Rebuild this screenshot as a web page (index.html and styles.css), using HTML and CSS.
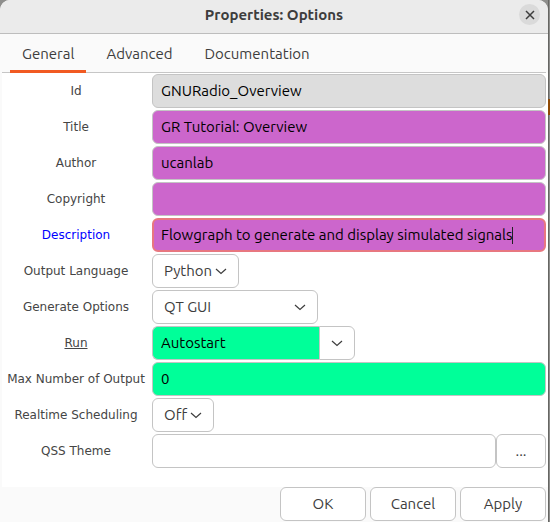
FILE: index.html
```html
<!DOCTYPE html>
<html lang="en">
<head>
<meta charset="utf-8">
<meta name="viewport" content="width=device-width, initial-scale=1">
<title>Properties: Options</title>
<link rel="stylesheet" href="styles.css">
</head>
<body>
<main class="dialog">
  <header class="titlebar">
    <h1>Properties: Options</h1>
    <button class="close" type="button" aria-label="Close">
      <svg width="10" height="10" viewBox="0 0 10 10"><path d="M1 1 9 9M9 1 1 9"/></svg>
    </button>
  </header>
  <nav class="tabs">
    <button class="tab active" type="button">General</button>
    <button class="tab" type="button">Advanced</button>
    <button class="tab" type="button">Documentation</button>
  </nav>
  <form class="params">
    <label for="id">Id</label>
    <input class="entry disabled" id="id" value="GNURadio_Overview" readonly>

    <label for="title">Title</label>
    <input class="entry string" id="title" value="GR Tutorial: Overview">

    <label for="author">Author</label>
    <input class="entry string" id="author" value="ucanlab">

    <label for="copyright">Copyright</label>
    <input class="entry string" id="copyright" value="">

    <label class="changed" for="description">Description</label>
    <div class="focused">
      <input class="entry string" id="description" value="Flowgraph to generate and display simulated signals">
      <span class="caret"></span>
    </div>

    <label for="language">Output Language</label>
    <div class="combo language">
      <select id="language"><option>Python</option><option>C++</option></select>
      <svg class="chevron" width="12" height="8" viewBox="0 0 12 8"><path d="M1 2 6 6.5 11 2"/></svg>
    </div>

    <label for="generate">Generate Options</label>
    <div class="combo generate">
      <select id="generate"><option>QT GUI</option><option>No GUI</option></select>
      <svg class="chevron" width="12" height="8" viewBox="0 0 12 8"><path d="M1 2 6 6.5 11 2"/></svg>
    </div>

    <label class="underlined" for="run">Run</label>
    <div class="editable">
      <input class="entry number" id="run" value="Autostart">
      <button type="button" aria-label="Show run choices">
        <svg class="chevron" width="12" height="8" viewBox="0 0 12 8"><path d="M1 2 6 6.5 11 2"/></svg>
      </button>
    </div>

    <label for="output">Max Number of Output</label>
    <input class="entry number" id="output" value="0">

    <label for="realtime">Realtime Scheduling</label>
    <div class="combo realtime">
      <select id="realtime"><option>Off</option><option>On</option></select>
      <svg class="chevron" width="12" height="8" viewBox="0 0 12 8"><path d="M1 2 6 6.5 11 2"/></svg>
    </div>

    <label for="theme">QSS Theme</label>
    <div class="file">
      <input class="entry" id="theme" value="">
      <button class="button browse" type="button">...</button>
    </div>
  </form>
  <footer class="actions">
    <button class="button" type="button">OK</button>
    <button class="button" type="button">Cancel</button>
    <button class="button" type="button">Apply</button>
  </footer>
</main>
<div class="desktop"><span class="desktop-block"></span></div>
</body>
</html>
```

FILE: styles.css
```css
* { box-sizing: border-box; }

body {
  margin: 0;
  display: flex;
  min-height: 100vh;
  overflow: hidden;
  background: #8e8e8c;
  color: #3d3d3d;
  font: 15px/20px Ubuntu, "Noto Sans", sans-serif;
}

button, input, select {
  font: inherit;
  color: inherit;
  margin: 0;
  outline: none;
}

svg {
  fill: none;
  stroke: #3d3d3d;
}

.chevron { stroke-width: 1.2; }

.dialog {
  flex: 1;
  min-width: 0;
  background: #fafafa;
  border-radius: 10px 10px 0 0;
  overflow: hidden;
}

.desktop {
  width: 2px;
  padding-top: 99px;
  background: linear-gradient(to right, #666663 50%, #8e8e8c 50%);
}

.desktop-block {
  display: block;
  height: 16px;
  background: #8f4a06;
}

.titlebar {
  display: grid;
  grid-template-columns: 1fr auto 1fr;
  align-items: center;
  height: 34px;
  padding: 0 8px 4px;
  background: #ebebeb;
  border-bottom: 1px solid #bdbdbd;
}

.titlebar h1 {
  grid-column: 2;
  margin: 0;
  font-size: 15px;
  font-weight: 700;
}

.close {
  justify-self: end;
  display: grid;
  place-items: center;
  width: 21px;
  height: 21px;
  padding: 0;
  border: 0;
  border-radius: 50%;
  background: #dadada;
}

.close svg { stroke-width: 1.5; }

.tabs {
  display: flex;
  gap: 8px;
  height: 39px;
  margin: 0 2px;
  padding: 0 8px;
  border-bottom: 1px solid #c6c6c6;
}

.tab {
  height: 39px;
  padding: 4px 12px 0;
  border: 0;
  border-bottom: 3px solid transparent;
  background: none;
}

.tab.active { border-bottom-color: #f15a22; }

.params {
  display: grid;
  grid-template-columns: 148px minmax(0, 1fr);
  grid-auto-rows: 34px;
  gap: 2px;
  align-items: center;
  margin: 0 0 0 2px;
  padding: 1px 2px 19px 0;
  background: #fff;
}

.params label {
  color: #454545;
  font: 12px/16px "DejaVu Sans", sans-serif;
  text-align: center;
  white-space: nowrap;
}

.params label.changed { color: #00f; }
.params label.underlined { text-decoration: underline; }

.entry {
  display: block;
  width: 100%;
  min-width: 0;
  height: 34px;
  padding: 0 8px 2px;
  border: 1px solid #c4c4c4;
  border-radius: 6px;
  background: #fff;
  color: #000;
}

.entry.disabled { background: #ddd; }
.entry.string { background: #cc66cc; }
.entry.number { background: #00ff99; }

.focused { position: relative; }

.focused .entry {
  padding: 0 7px 2px;
  border: 2px solid #e87780;
}

.caret {
  position: absolute;
  top: 9px;
  left: 360px;
  width: 1px;
  height: 17px;
  background: #222;
}

.combo {
  display: grid;
  align-items: center;
}

.combo > * { grid-area: 1 / 1; }

.combo select {
  width: 100%;
  height: 34px;
  padding: 0 11px;
  border: 1px solid #c4c4c4;
  border-radius: 6px;
  background: #fff;
  appearance: none;
}

.combo .chevron {
  justify-self: end;
  margin-right: 12px;
  pointer-events: none;
}

.language { width: 87px; }
.generate { width: 166px; }
.realtime { width: 62px; }

.editable {
  display: flex;
  width: 203px;
}

.editable .entry {
  flex: 1;
  border-right: 0;
  border-radius: 6px 0 0 6px;
}

.editable button {
  display: grid;
  place-items: center;
  width: 36px;
  padding: 0;
  border: 1px solid #c4c4c4;
  border-radius: 0 6px 6px 0;
  background: #fff;
}

.file { display: flex; }
.file .entry { flex: 1; }

.button {
  width: 86px;
  height: 34px;
  padding: 0;
  border: 1px solid #c4c4c4;
  border-radius: 6px;
  background: #fff;
}

.button.browse { width: 50px; }

.actions {
  display: flex;
  justify-content: flex-end;
  gap: 4px;
  padding: 0 2px 0 0;
}
```
